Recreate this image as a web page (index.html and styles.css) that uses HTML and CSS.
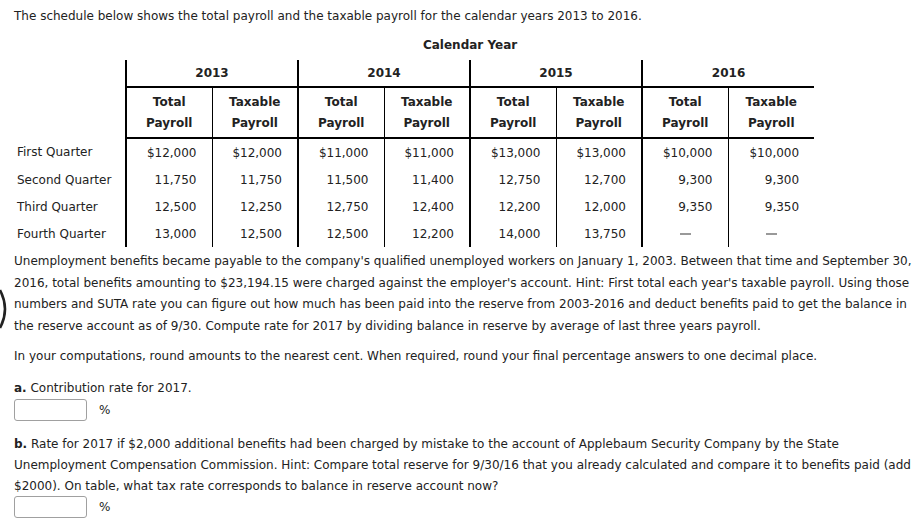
FILE: index.html
```html
<!DOCTYPE html>
<html>
<head>
<meta charset="utf-8">
<link rel="stylesheet" href="styles.css">
</head>
<body>
<div class="page">
  <p class="intro">The schedule below shows the total payroll and the taxable payroll for the calendar years 2013 to 2016.</p>
  <table class="sched">
    <colgroup>
      <col class="col-label">
      <col class="col-num"><col class="col-num"><col class="col-num"><col class="col-num">
      <col class="col-num"><col class="col-num"><col class="col-num"><col class="col-num">
    </colgroup>
    <tr class="cal-row">
      <td class="label"></td>
      <th colspan="8" class="cal">Calendar Year</th>
    </tr>
    <tr class="year-row">
      <td class="label"></td>
      <th colspan="2" class="yr">2013</th>
      <th colspan="2" class="yr">2014</th>
      <th colspan="2" class="yr">2015</th>
      <th colspan="2" class="yr">2016</th>
    </tr>
    <tr class="head-row">
      <td class="label"></td>
      <th class="c first">Total<br>Payroll</th><th class="c">Taxable<br>Payroll</th>
      <th class="c first">Total<br>Payroll</th><th class="c">Taxable<br>Payroll</th>
      <th class="c first">Total<br>Payroll</th><th class="c">Taxable<br>Payroll</th>
      <th class="c first">Total<br>Payroll</th><th class="c">Taxable<br>Payroll</th>
    </tr>
    <tr class="data">
      <td class="label">First Quarter</td>
      <td class="n first">$12,000</td><td class="n">$12,000</td>
      <td class="n first">$11,000</td><td class="n">$11,000</td>
      <td class="n first">$13,000</td><td class="n">$13,000</td>
      <td class="n first">$10,000</td><td class="n">$10,000</td>
    </tr>
    <tr class="data">
      <td class="label">Second Quarter</td>
      <td class="n first">11,750</td><td class="n">11,750</td>
      <td class="n first">11,500</td><td class="n">11,400</td>
      <td class="n first">12,750</td><td class="n">12,700</td>
      <td class="n first">9,300</td><td class="n">9,300</td>
    </tr>
    <tr class="data">
      <td class="label">Third Quarter</td>
      <td class="n first">12,500</td><td class="n">12,250</td>
      <td class="n first">12,750</td><td class="n">12,400</td>
      <td class="n first">12,200</td><td class="n">12,000</td>
      <td class="n first">9,350</td><td class="n">9,350</td>
    </tr>
    <tr class="data">
      <td class="label">Fourth Quarter</td>
      <td class="n first">13,000</td><td class="n">12,500</td>
      <td class="n first">12,500</td><td class="n">12,200</td>
      <td class="n first">14,000</td><td class="n">13,750</td>
      <td class="dash first"><span class="bar"></span></td><td class="dash"><span class="bar"></span></td>
    </tr>
  </table>
  <p class="para">Unemployment benefits became payable to the company's qualified unemployed workers on January 1, 2003. Between that time and September 30, 2016, total benefits amounting to $23,194.15 were charged against the employer's account. Hint: First total each year's taxable payroll. Using those numbers and SUTA rate you can figure out how much has been paid into the reserve from 2003-2016 and deduct benefits paid to get the balance in the reserve account as of 9/30. Compute rate for 2017 by dividing balance in reserve by average of last three years payroll.</p>
  <p class="para round">In your computations, round amounts to the nearest cent. When required, round your final percentage answers to one decimal place.</p>
  <p class="para qa"><b>a.</b> Contribution rate for 2017.</p>
  <div class="answer a1"><span class="box"></span><span class="pct">%</span></div>
  <p class="para qb"><b>b.</b> Rate for 2017 if $2,000 additional benefits had been charged by mistake to the account of Applebaum Security Company by the State Unemployment Compensation Commission. Hint: Compare total reserve for 9/30/16 that you already calculated and compare it to benefits paid (add $2000). On table, what tax rate corresponds to balance in reserve account now?</p>
  <div class="answer a2"><span class="box"></span><span class="pct">%</span></div>
  <svg class="arc" width="8" height="40" viewBox="0 0 8 40"><path d="M0 1 Q 10 20 0 39" fill="none" stroke="#222" stroke-width="2.6"/></svg>
</div>
</body>
</html>
```
FILE: styles.css
```css
html, body {
  margin: 0;
  padding: 0;
  background: #fff;
}
body {
  font-family: "DejaVu Sans", Verdana, sans-serif;
  font-size: 12px;
  color: #222;
}
.page {
  position: relative;
  width: 903px;
  padding: 8px 0 0 14px;
}
p { margin: 0; }
.intro {
  line-height: 17px;
}
.sched {
  border-collapse: collapse;
  table-layout: fixed;
  width: 800px;
  margin-top: 9px;
}
.col-label { width: 112px; }
.col-num { width: 86px; }
.sched td, .sched th {
  padding: 0;
}
.label {
  padding-left: 3px !important;
  text-align: left;
  white-space: nowrap;
}
.cal-row th {
  height: 22px;
  font-weight: bold;
  text-align: center;
  vertical-align: middle;
  padding-bottom: 4px !important;
}
.year-row th {
  height: 26px;
  border-left: 2px solid #000;
  border-bottom: 2px solid #000;
  font-weight: bold;
  text-align: center;
}
.head-row th {
  height: 48px;
  line-height: 21px;
  font-weight: bold;
  text-align: center;
  border-left: 1px solid #000;
  border-bottom: 2px solid #000;
  padding-top: 1px !important;
}
.head-row th.first,
.data td.first {
  border-left: 2px solid #000;
}
.data td {
  height: 27px;
}
.data td.n, .data td.dash {
  border-left: 1px solid #000;
  text-align: right;
  padding-right: 15px;
}
.data td.first {
  border-left-width: 2px;
}
.data td.dash {
  text-align: center;
  padding-right: 0;
}
.bar {
  display: inline-block;
  width: 11px;
  height: 2px;
  background: #999;
  vertical-align: middle;
}
.para {
  line-height: 21.5px;
}
.sched + .para {
  margin-top: 4px;
}
.round {
  margin-top: 9px;
}
.qa {
  margin-top: 10px;
}
.qb {
  margin-top: 13px;
  line-height: 21px;
}
.answer {
  display: flex;
  align-items: center;
  height: 23px;
}
.a1 {
  margin-top: -1px;
}
.a2 {
  margin-top: -2px;
}
.box {
  display: inline-block;
  width: 71px;
  height: 20px;
  border: 1px solid #a0a0a0;
  border-radius: 3px;
  background: #fff;
}
.pct {
  margin-left: 12px;
}
.arc {
  position: absolute;
  left: 0;
  top: 289px;
}
```
